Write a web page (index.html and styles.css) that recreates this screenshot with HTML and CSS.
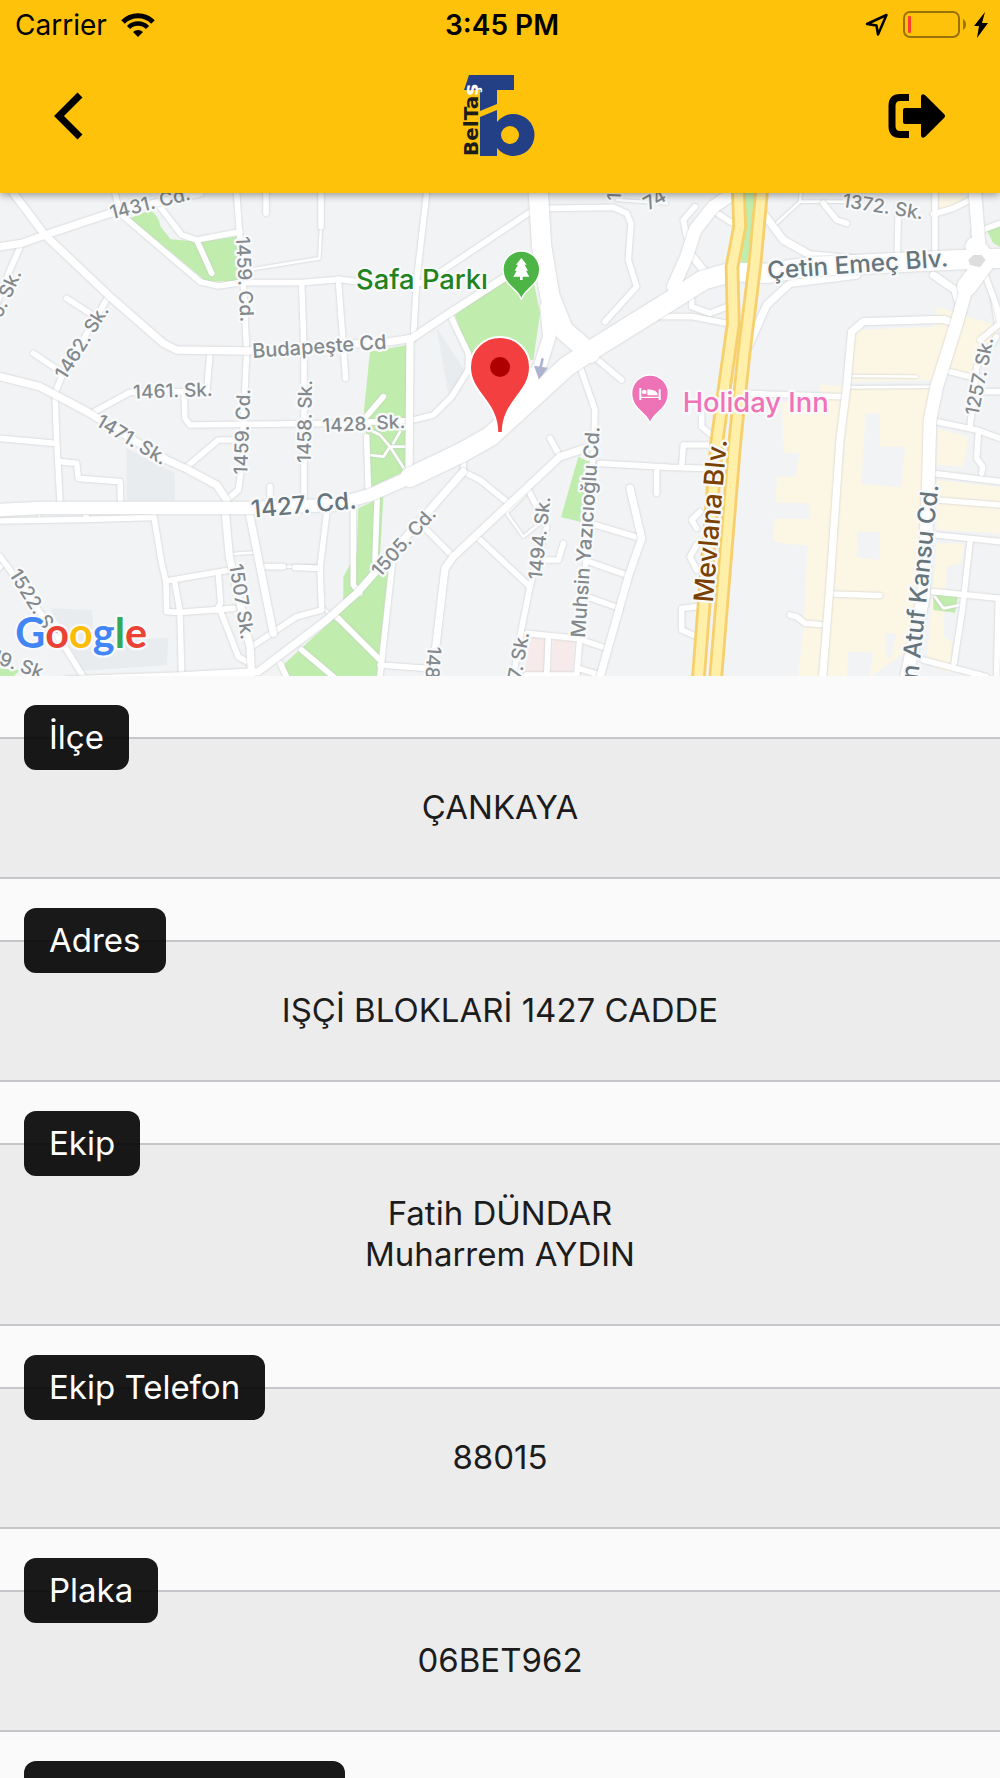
FILE: index.html
```
<!DOCTYPE html>
<html lang="tr">
    <head>
        <meta charset="utf-8">
        <meta name="viewport" content="width=device-width, initial-scale=1">
        <title>BelTaş</title>
        <link rel="stylesheet" href="styles.css">
    </head>
    <body>
        <header class="top">
            <div class="status">
                <div class="status-left">
                    <span>Carrier</span>
                    <svg width="34" height="24" viewBox="0 0 34 24">
                        <path d="M2 9a21 21 0 0 1 30 0" fill="none" stroke="#000" stroke-width="5"/>
                        <path d="M7.500 14.500a13.500 13.500 0 0 1 19 0" fill="none" stroke="#000" stroke-width="4.500"/>
                        <path d="M17 24l-5-5a7 7 0 0 1 10 0z"/>
                    </svg>
                </div>
                <span class="time">3:45 PM</span>
                <div class="status-right">
                    <svg width="24" height="24" viewBox="0 0 24 24">
                        <path d="M2 11L21.500 2L13 21.500L11.500 12.500z" fill="none" stroke="#000" stroke-width="2.500" stroke-linejoin="round"/>
                    </svg>
                    <svg width="64" height="28" viewBox="0 0 64 28">
                        <rect x="1" y="1" width="55" height="25" rx="6" fill="none" stroke="#987309" stroke-width="2"/>
                        <rect x="5" y="5" width="3" height="17" rx="1" fill="#ff3b30"/>
                        <path d="M60 8q3 2 3 5.500t-3 5.500z" fill="#987309"/>
                    </svg>
                    <svg width="16" height="26" viewBox="0 0 16 26">
                        <path d="M12 0L1 14h5L4 26L15 11H9z"/>
                    </svg>
                </div>
            </div>
            <nav class="bar">
                <button class="icon-btn" aria-label="Geri">
                    <svg width="30" height="48" viewBox="0 0 30 48">
                        <path d="M26 3L5 24L26 45" fill="none" stroke="#000" stroke-width="7"/>
                    </svg>
                </button>
                <svg class="logo" width="72" height="82" viewBox="0 0 72 82" role="img" aria-label="BelTaş">
                    <path d="M5 0H50V15H33V29L16 36V15H0z" fill="#233f86"/>
                    <path d="M16 42L33 35V47A21 21 0 1 1 33 73V81H16z" fill="#233f86"/>
                    <circle cx="46" cy="60" r="9" fill="#ffc20a"/>
                    <text class="logo-text" transform="translate(14 81) rotate(-90)">BelTa<tspan fill="#fff">ş</tspan></text>
                </svg>
                <button class="icon-btn right" aria-label="Çıkış">
                    <svg width="58" height="44" viewBox="0 0 58 44">
                        <path d="M21 3.500H12Q4 3.500 4 12V32Q4 40.500 12 40.500H21" fill="none" stroke="#000" stroke-width="7" stroke-linejoin="round"/>
                        <path d="M17 14H33V2Q34-1 37 1L56 20Q58 22 56 24L37 43Q34 45 33 42V30H17Q15 30 15 28V16Q15 14 17 14z"/>
                    </svg>
                </button>
            </nav>
        </header>

        <svg class="map" viewBox="0 39 3000 1449" preserveAspectRatio="xMidYMid slice" role="img" aria-label="Harita">
            <!-- blocks -->
            <g fill="#e8ecef">
                <path d="M380 805L525 880V962H380z"/>
                <path d="M150 1285L275 1290L285 1380L505 1375L500 1455L250 1472z"/>
                <path d="M1310 445L1400 580L1345 640z"/>
            </g>
            <g fill="#fcf6e5">
                <path d="M2570 450L2800 440L2810 420V380L3000 440L2920 590L2850 575L2810 600L2545 605z"/>
                <path d="M2345 665H2460V615L2800 625L2780 900L2770 1250L2740 1400L2610 1490H2395L2410 1340L2423 1098L2318 1085L2325 1015L2430 1018V970H2328L2330 890H2385L2400 820L2352 818z"/>
                <path d="M2810 745L2905 770L2890 860L2810 855z"/>
                <path d="M2810 900L3000 920V1060L2810 1050z"/>
                <path d="M2810 1090H2890L2885 1150L2840 1160L2830 1370L2855 1385L2850 1480L2780 1450z"/>
                <path d="M2810 39H2900L2890 75L2820 90z"/>
            </g>
            <g fill="#f1f3f5">
                <path d="M2590 800H2715L2705 922L2585 912z"/>
                <path d="M2572 1055H2640V1140L2570 1132z"/>
                <path d="M2595 700H2640V800H2592z"/>
                <path d="M2545 1415L2620 1418L2610 1490H2540z"/>
                <path d="M2655 1360L2690 1362L2670 1440L2655 1415z"/>
            </g>
            <g fill="#f6eaea">
                <path d="M1590 1372L1640 1378L1632 1478H1575z"/>
                <path d="M1662 1380L1722 1384L1716 1482L1652 1480z"/>
            </g>
            <g fill="#c0ecae">
                <path d="M390 115L450 90Q475 105 482 140L512 178L600 185L710 170L725 302L620 305z"/>
                <path d="M1365 405L1510 300L1600 300L1620 400L1600 540L1410 530z"/>
                <path d="M1110 515L1222 495V870L1115 920L1100 780L1092 690z"/>
                <path d="M1075 985L1150 950L1140 1130L1165 1170L1130 1490H860L855 1450L1030 1290V1190L1070 1120z"/>
                <path d="M1735 830L1775 850L1748 1027L1683 1012z"/>
                <path d="M2960 150L3000 135V200L2980 190z"/>
                <path d="M2800 1245H2875L2865 1298L2800 1290z"/>
                <path d="M0 1465L60 1470L40 1490H0z"/>
            </g>

            <!-- streets -->
            <g class="roads thin">
                <path d="M963 140L958 235L760 267"/>
                <path d="M695 1122L760 1118M850 1160H960M118 985V1020M965 1280L1010 1320"/>
                <path d="M1520 1000L1570 1070L1620 1030M1520 1000L1580 940"/>
                <path d="M1850 60L2000 70M2330 130L2400 65H2560M2400 65L2402 39"/>
                <path d="M2540 622L2810 620M2545 588L2750 590M2970 320L2990 440"/>
                <path d="M1110 825L1150 830L1170 800L1140 765L1110 750M1170 800L1215 870M1170 800H1220M1180 790L1200 755"/>
                <path d="M2805 1250L2830 1285L2880 1275"/>
            </g>
            <g class="roads">
                <path d="M345 39L360 100L600 305L655 318L720 308H905L1020 298L1070 305L1260 310L1330 270L1600 90"/>
                <path d="M480 80L545 165L590 180L720 155M590 180L635 280"/>
                <path d="M710 39L718 155L730 310L740 513L730 740L722 880L715 930L680 960"/>
                <path d="M798 39V100M963 39V140M905 308L912 513V970M1015 297L1037 595"/>
                <path d="M1280 39L1250 300L1240 475"/>
                <path d="M1350 405L1405 520V570L1355 650L1300 705L1230 722L1000 730L570 735L555 715L552 635L390 637L275 700"/>
                <path d="M325 350L185 590L165 640L170 780L180 965M200 355L270 400M100 520L175 570"/>
                <path d="M630 520L620 635M0 775L165 790"/>
                <path d="M180 845L230 850L235 895L360 905L362 965M555 865L655 780H720M810 920V970"/>
                <path d="M0 1023L260 1018L460 1012M258 985V1018"/>
                <path d="M460 1000L485 1150L498 1205L500 1295L540 1297L700 1285M498 1203L690 1170M525 1210L540 1297L545 1490"/>
                <path d="M655 1180L662 1270L650 1290M660 1290L715 1430L750 1450M790 1160H850M885 1162L960 1165"/>
                <path d="M0 1130L30 1170L200 1410L250 1490M0 1160L-10 1170M65 190L30 270L-10 370"/>
                <path d="M980 1000L960 1165L965 1290L890 1310L755 1400"/>
                <path d="M1100 770L1105 930M1090 720L1150 650M1060 980V1215L1080 1240M1132 940L1125 1140M1178 1140L1140 1490"/>
                <path d="M1010 1310L1140 1440M905 1410L1000 1490M840 1450L860 1490M1140 1455L1280 1465"/>
                <path d="M1390 830V875L1440 900L1520 965M1280 1050L1360 1130M1430 1070L1590 1220M1650 775L1680 830"/>
                <path d="M1585 930L1640 1040L1590 1220L1560 1370L1540 1490M1630 1140H1675L1690 1090"/>
                <path d="M1740 560L1785 690L1782 780L1765 1050L1730 1490M1800 850L2010 862L2120 865M1970 870V940"/>
                <path d="M1770 1030L1920 1075M1765 1145L1880 1185M1760 1250L1860 1285M1580 1360L1730 1375L1820 1405M1735 1465L1800 1485M1645 1375L1640 1490M1580 1485H1730"/>
                <path d="M1640 85L1840 82L1880 100L1893 130L1885 240L1910 320L1815 425M1770 520L1865 600"/>
                <path d="M1950 410L2080 410L2190 432M2060 170L2050 120L2085 80M2130 85L2190 125L2230 140M2075 340V380L2130 400L2195 375"/>
                <path d="M2470 70L2510 120L2540 130M2695 80L2692 220M2805 39V220M2800 103L2860 85L2910 60"/>
                <path d="M2240 640L2520 650M2850 575L2910 590M2810 725L2930 750L3000 775M2990 470L2930 560L2910 740M2960 635H3000"/>
                <path d="M2800 880L3000 905M2810 960L3000 975M2810 1065L3000 1085M2910 1085L2887 1290L2862 1450M2800 1235L3000 1255M2770 1440L2960 1490"/>
                <path d="M2935 760L2930 835L2948 860L2945 880M2495 1242L2640 1247M2370 1305L2390 1310L2415 1330L2480 1335M2995 1255L2990 1490"/>
                <path d="M2045 860L2050 795H2130M2100 995L2075 1020L2090 1045M2090 1095L2070 1130L2090 1170M2090 1280L2045 1285V1350L2090 1370M2105 700V740L2140 770"/>
                <path d="M3000 130L2920 160M2950 270L2990 380L3000 430M2940 480L3000 430"/>
            </g>
            <g class="roads mid">
                <path d="M40 39L135 165L330 350L490 490L530 510L740 513L1170 485L1235 475L1340 405L1510 295"/>
                <path d="M0 200L65 190L135 165L330 100L600 39M1230 475L1227 870"/>
                <path d="M0 590L120 620L270 700L400 780L500 840L560 867L650 915L680 960"/>
                <path d="M675 985L688 1130L750 1400L755 1490M745 985L780 1160L820 1360"/>
                <path d="M1390 875L1070 1240L980 1320L775 1475L540 1488L200 1500"/>
                <path d="M1770 800L1680 830L1360 1130L1335 1165L1305 1420"/>
                <path d="M1890 925L1925 1075L1885 1190L1800 1490M2070 220L2110 270"/>
                <path d="M2290 100L2350 180L2430 225L2600 240M2245 500L2300 375L2370 310L2570 285M2800 285L2865 330L2885 400"/>
                <path d="M2850 425L2830 418L2590 425L2555 455L2540 620L2520 780L2488 1240L2468 1490"/>
            </g>
            <g class="roads major">
                <path d="M0 990L120 984H750L1000 975L1110 945L1230 892L1390 815"/>
                <path d="M2020 320L2060 230L2085 150L2140 80L2200 40M1640 380L1648 470L1620 560L1560 640"/>
                <path d="M2925 39L2940 230L2895 340L2870 430L2810 620L2790 720L2785 910L2770 1250L2720 1490"/>
                <path class="wide" d="M1230 892L1390 815L1470 770L1700 560L1790 500L2000 370L2110 300L2200 275L2300 280L2430 260L2860 240L3000 235"/>
                <path class="wide" d="M1615 39L1625 200L1650 350L1690 450L1770 520"/>
                <path class="wide" d="M2925 200L2960 240L2900 320"/>
            </g>
            <path d="M2905 240L2920 225H2945L2957 240L2940 262L2910 255z" fill="#dedede"/>

            <!-- Mevlana Blv. -->
            <path d="M2235 39H2275L2252 248H2222z" fill="#c0ecae"/>
            <g class="highway-edge">
                <path d="M2215 30L2219 140L2196 260L2200 430L2150 790L2095 1495"/>
                <path d="M2285 30L2265 250L2232 520L2205 780L2147 1495"/>
            </g>
            <g class="highway">
                <path d="M2215 30L2219 140L2196 260L2200 430L2150 790L2095 1495"/>
                <path d="M2285 30L2265 250L2232 520L2205 780L2147 1495"/>
            </g>
            <path d="M1628 535L1620 570M1608 562L1618 590L1636 566z" fill="#aeb4d0" stroke="#aeb4d0" stroke-width="8"/>

            <!-- street names -->
            <g class="label">
                <text transform="translate(335 118) rotate(-14)">1431. Cd.</text>
                <text transform="translate(708 170) rotate(87)">1459. Cd.</text>
                <text transform="translate(4 418) rotate(-66)">6. Sk.</text>
                <text transform="translate(196 602) rotate(-58)">1462. Sk.</text>
                <text class="long-name" transform="translate(758 534) rotate(-4)">Budapeşte Cd</text>
                <text transform="translate(400 656) rotate(-2)">1461. Sk.</text>
                <text transform="translate(285 735) rotate(31)">1471. Sk.</text>
                <text transform="translate(742 884) rotate(-88)">1459. Cd.</text>
                <text transform="translate(932 849) rotate(-89)">1458. Sk.</text>
                <text transform="translate(968 757) rotate(-3)">1428. Sk.</text>
                <text transform="translate(1140 1194) rotate(-48)">1505. Cd.</text>
                <text transform="translate(1625 1200) rotate(-84)">1494. Sk.</text>
                <text transform="translate(1563 1500) rotate(-80)">7. Sk.</text>
                <text transform="translate(1283 1398) rotate(94)">148</text>
                <text class="long-name" transform="translate(1755 1374) rotate(-86)">Muhsin Yazıcıoğlu Cd.</text>
                <text transform="translate(2525 80) rotate(9)">1372. Sk.</text>
                <text transform="translate(2935 709) rotate(-79)">1257. Sk.</text>
                <text transform="translate(26 1183) rotate(58)">1522. Sk.</text>
                <text transform="translate(-28 1445) rotate(19)">19. Sk.</text>
                <text transform="translate(688 1155) rotate(81)">1507 Sk.</text>
                <text transform="translate(1945 92) rotate(-30)">74</text>
                <text transform="translate(1862 62) rotate(-88)">1</text>
            </g>
            <g class="label street">
                <text transform="translate(755 1013) rotate(-5)">1427. Cd.</text>
                <text transform="translate(2303 297) rotate(-4)">Çetin Emeç Blv.</text>
                <text transform="translate(2754 1500) rotate(-84)">n Atuf Kansu Cd.</text>
                <text class="avenue" transform="translate(2138 1269) rotate(-85)">Mevlana Blv.</text>
            </g>
            <g class="label place">
                <text class="park" x="1068" y="326">Safa Parkı</text>
                <text class="hotel" x="2048" y="697">Holiday Inn</text>
            </g>

            <!-- pins -->
            <g transform="translate(1564 268)">
                <path d="M0 92C-4 60-55 50-55 0A55 55 0 0 1 55 0C55 50 4 60 0 92z" fill="#4db546" stroke="#fff" stroke-width="4"/>
                <path d="M0-34L16-14H10L20 4H14L24 22H4V32H-4V22H-24L-14 4H-20L-10-14H-16z" fill="#fff"/>
            </g>
            <g transform="translate(1950 640)">
                <path d="M0 92C-4 60-55 50-55 0A55 55 0 0 1 55 0C55 50 4 60 0 92z" fill="#ee72b6" stroke="#fff" stroke-width="4"/>
                <path d="M-32-16H-26V10H26V-12H32V20H26V14H-26V20H-32zM-8 6V-12Q22-12 24 6z" fill="#fff"/>
                <circle cx="-17" cy="-4" r="7" fill="#fff"/>
            </g>
            <g transform="translate(1500 561)">
                <path d="M-8 198C-8 100-90 80-90 0A90 90 0 0 1 90 0C90 80 8 100 8 198z" fill="#f33f3f" stroke="#fff" stroke-width="6"/>
                <circle r="30" fill="#ae0000"/>
            </g>

            <text class="google" x="46" y="1404"><tspan fill="#4285f4">G</tspan><tspan fill="#ea4335">o</tspan><tspan fill="#fbbc05">o</tspan><tspan fill="#4285f4">g</tspan><tspan fill="#34a853">l</tspan><tspan fill="#ea4335">e</tspan></text>
        </svg>

        <main class="details">
            <section class="field">
                <h2>İlçe</h2>
                <p>ÇANKAYA</p>
            </section>
            <section class="field">
                <h2>Adres</h2>
                <p>IŞÇİ BLOKLARİ 1427 CADDE</p>
            </section>
            <section class="field">
                <h2>Ekip</h2>
                <p>Fatih DÜNDAR<br>Muharrem AYDIN</p>
            </section>
            <section class="field">
                <h2>Ekip Telefon</h2>
                <p>88015</p>
            </section>
            <section class="field">
                <h2>Plaka</h2>
                <p>06BET962</p>
            </section>
            <section class="field">
                <h2 class="long"></h2>
                <p></p>
            </section>
        </main>
    </body>
</html>
```

FILE: styles.css
```
*{box-sizing:border-box;}
body{
    margin: 0;
    height: 100vh;
    display: flex;
    flex-direction: column;
    overflow: hidden;
    font-family: Inter, "Liberation Sans", sans-serif;
    color: #1c1c1c;
    background-color: #fafafa;
}

/* header */
.top{
    flex: none;
    position: relative;
    background-color: #ffc20a;
    color: black;
    box-shadow: 0 2px 8px rgba(0,0,0,.4);
}
.status{
    display: grid;
    grid-template-columns: 1fr auto 1fr;
    align-items: center;
    height: 50px;
    padding: 0 11px 0 15px;
    font-size: 28px;
}
.status-left,.status-right{display:flex; align-items:center; gap:14px;}
.status-right{justify-content: flex-end; gap: 6px;}
.status-right svg:first-child{margin-right: 8px;}
.time{font-weight: 600;}
.bar{
    display: grid;
    grid-template-columns: 1fr auto 1fr;
    align-items: center;
    height: 143px;
    padding: 0 54px 12px;
}
.icon-btn{
    display: flex;
    justify-self: start;
    padding: 0;
    border: none;
    background: none;
    cursor: pointer;
}
.right{justify-self: end;}
.logo{overflow: visible;}
.logo-text{font: bold 20px "DejaVu Sans", sans-serif; fill: #1c1c1c;}

/* map */
.map{
    flex: none;
    display: block;
    width: 100%;
    height: 483px;
    position: relative;
    z-index: -1;
    background-color: #f1f3f5;
}
.roads{
    fill: none;
    stroke: white;
    stroke-width: 17;
    stroke-linejoin: round;
    stroke-linecap: round;
    filter: drop-shadow(0 0 3px #c4c6c8);
}
.thin{stroke-width: 8;}
.mid{stroke-width: 22;}
.major{stroke-width: 38;}
.wide{stroke-width: 58;}
.highway-edge{fill:none; stroke:#f6d06c; stroke-width:44; stroke-linejoin:round;}
.highway{fill:none; stroke:#ffefa8; stroke-width:27; stroke-linejoin:round;}
.label{
    font-size: 57px;
    font-weight: 500;
    fill: #83898c;
    stroke: #f8f9fa;
    stroke-width: 14px;
    stroke-linejoin: round;
    paint-order: stroke;
}
.long-name{font-size: 60px;}
.street{font-size: 73px; fill: #66757c;}
.avenue{font-size: 81px; fill: #7a4100;}
.place{font-size: 82px;}
.park{fill: #1f8320;}
.hotel{fill: #f073b8;}
.google{
    font: bold 124px Lato, sans-serif;
    stroke: #f8f9fa;
    stroke-width: 14px;
    stroke-linejoin: round;
    paint-order: stroke;
}

/* detail list */
.details{
    flex: 1;
    min-height: 0;
    overflow-y: auto;
    scrollbar-width: none;
}
.field{
    position: relative;
    margin-top: 61px;
    padding: 48px 24px 49px;
    border-top: 2px solid #c6c6ca;
    border-bottom: 2px solid #c6c6ca;
    background-color: #ececec;
    font-size: 33px;
    line-height: 41px;
    text-align: center;
}
.field h2{
    position: absolute;
    top: -34px;
    left: 24px;
    height: 65px;
    margin: 0;
    padding: 12px 25px;
    border-radius: 12px;
    background-color: rgba(0,0,0,.9);
    color: white;
    font-size: 33px;
    font-weight: 400;
}
.field .long{width: 321px;}
.field p{min-height: 41px; margin: 0;}
```
